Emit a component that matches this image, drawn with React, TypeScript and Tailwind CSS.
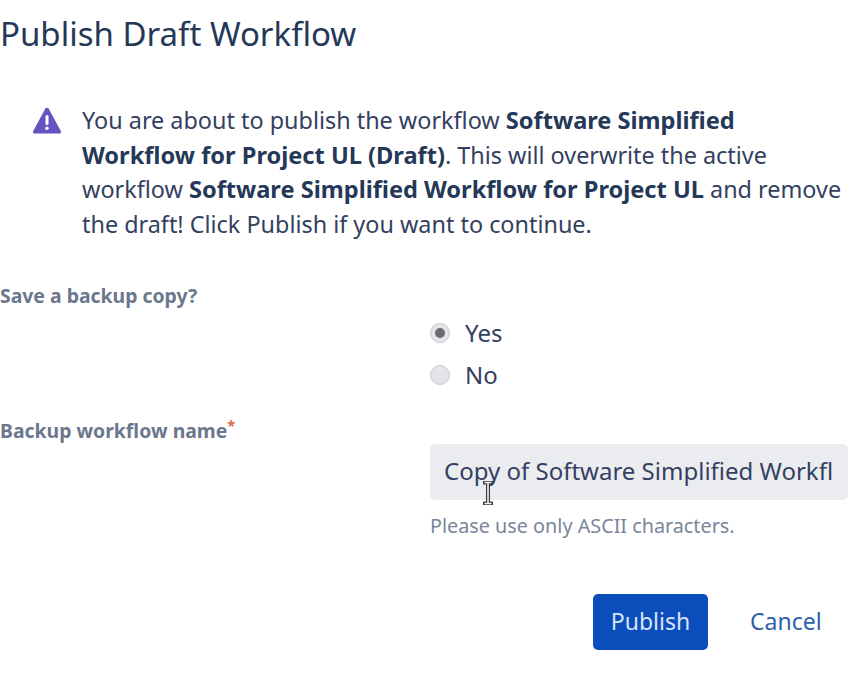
const font = { fontFamily: '"Noto Sans", sans-serif' }

function WarningIcon() {
  return (
    <svg viewBox="0 0 30 28" className="h-[28px] w-[30px] shrink-0">
      <path
        d="M13.4 1.6 L1.2 24 C0.6 25.4 1.2 26.6 2.8 26.6 L27.2 26.6 C28.8 26.6 29.4 25.4 28.8 24 L16.6 1.6 C15.8 0.4 14.2 0.4 13.4 1.6 Z"
        fill="#6554c0"
      />
      <rect x="13.5" y="8" width="3" height="10" rx="1.5" fill="#fff" />
      <circle cx="15" cy="21.2" r="1.7" fill="#fff" />
    </svg>
  )
}

function Radio({ checked, label }: { checked?: boolean; label: string }) {
  return (
    <div className="flex h-[42px] items-center">
      <span className="flex h-[20px] w-[20px] items-center justify-center rounded-full border border-[#c9c9cc] bg-[#e4e5e8]">
        {checked && <span className="h-[10px] w-[10px] rounded-full bg-[#6b6c72]" />}
      </span>
      <span className="ml-[15px] text-[24px] text-[#344060]">{label}</span>
    </div>
  )
}

function IBeam() {
  return (
    <svg viewBox="0 0 10 24" className="absolute left-[53px] top-[37px] h-[24px] w-[10px]">
      <path
        d="M1 1.5 H9 M1 22.5 H9 M5 1.5 V22.5"
        stroke="#3c3c3c"
        strokeWidth="4"
        fill="none"
        strokeLinecap="round"
      />
      <path d="M1.5 1.5 H8.5 M1.5 22.5 H8.5 M5 1.5 V22.5" stroke="#f2f2f2" strokeWidth="1.6" fill="none" />
    </svg>
  )
}

export default function App() {
  return (
    <div className="h-[682px] w-[868px] overflow-hidden bg-white" style={font}>
      <h1 className="pt-[12px] text-[33px] leading-[44px] text-[#253858]">Publish Draft Workflow</h1>

      <div className="mt-[47px] flex gap-[20px] pl-[32px]">
        <div className="pt-[4px]">
          <WarningIcon />
        </div>
        <p className="whitespace-nowrap text-[23.4px] leading-[34.6px] text-[#344060]">
          You are about to publish the workflow{' '}
          <strong className="text-[23.6px] font-bold text-[#253858]">Software Simplified</strong>
          <br />
          <strong className="text-[23.6px] font-bold text-[#253858]">Workflow for Project UL (Draft)</strong>. This will
          overwrite the active
          <br />
          workflow <strong className="text-[23.6px] font-bold text-[#253858]">Software Simplified Workflow for Project UL</strong>{' '}
          and remove
          <br />
          the draft! Click Publish if you want to continue.
        </p>
      </div>

      <div className="mt-[41px] flex">
        <label className="w-[430px] shrink-0 text-[19.4px] font-bold leading-[28px] text-[#6b778c]">
          Save a backup copy?
        </label>
        <div className="pt-[30px]">
          <Radio checked label="Yes" />
          <Radio label="No" />
        </div>
      </div>

      <div className="mt-[21px] flex">
        <label className="w-[430px] shrink-0 text-[19.4px] font-bold leading-[28px] text-[#6b778c]">
          Backup workflow name<sup className="text-[#d9694f]">*</sup>
        </label>
        <div className="relative mt-[27px] w-[418px]">
          <div className="flex h-[56px] items-center rounded-[5px] bg-[#ebecf0] px-[14px] pb-[3px]">
            <span className="overflow-hidden whitespace-nowrap text-[24px] text-[#344060]">
              Copy of Software Simplified Workflow for Project UL
            </span>
          </div>
          <IBeam />
          <p className="mt-[12px] text-[19.8px] leading-[28px] text-[#7a869a]">Please use only ASCII characters.</p>
        </div>
      </div>

      <div className="mt-[54px] flex items-center pl-[593px]">
        <button className="h-[56px] w-[115px] rounded-[5px] bg-[#0b4dbb] pb-[3px] text-[23px] text-[#d7e4fa]">Publish</button>
        <button className="mb-[3px] ml-[42px] text-[23px] text-[#2f5fa8]">Cancel</button>
      </div>
    </div>
  )
}
